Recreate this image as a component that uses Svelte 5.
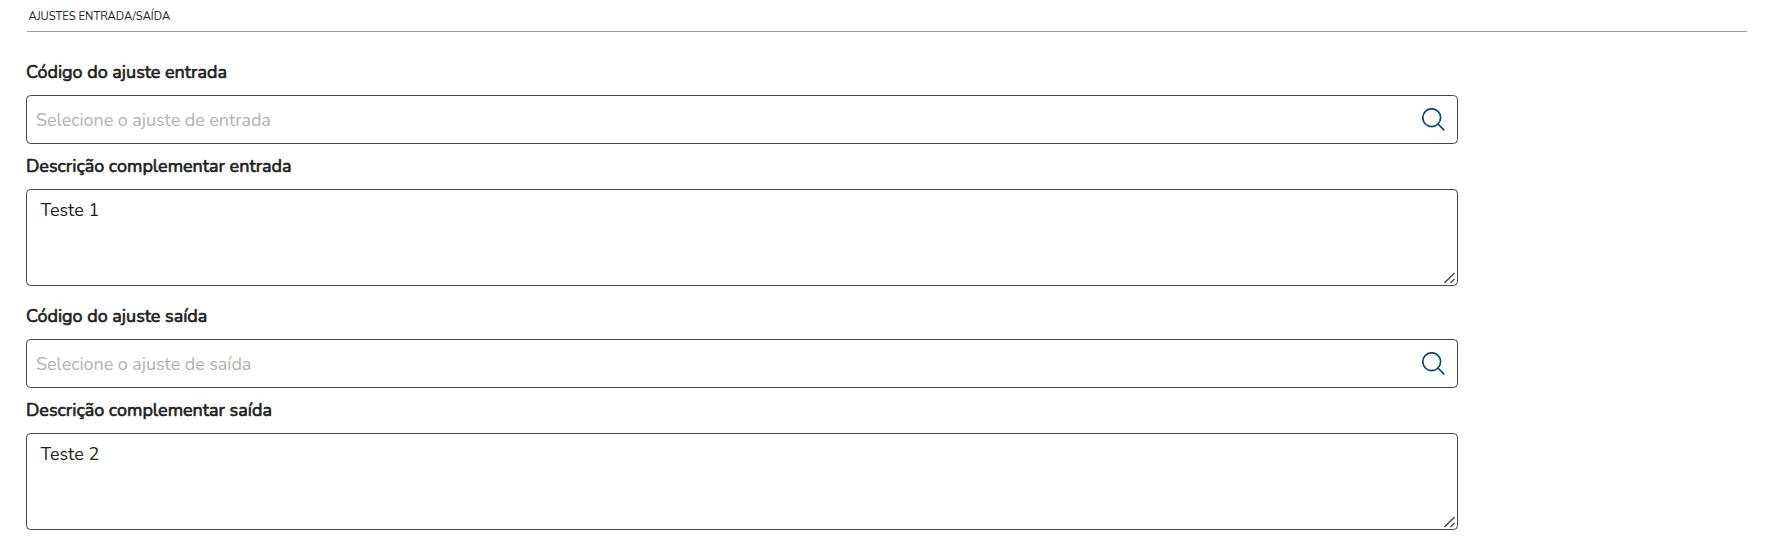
<script lang="ts">
  type Adjustment = {
    id: string;
    name: string;
    code: string;
    description: string;
  };

  let adjustments: Adjustment[] = $state([
    { id: "entrada", name: "entrada", code: "", description: "Teste 1" },
    { id: "saida", name: "saída", code: "", description: "Teste 2" },
  ]);
</script>

<section class="adjustments">
  <h2>AJUSTES ENTRADA/SAÍDA</h2>

  {#each adjustments as item (item.id)}
    <div class="group">
      <label for="code-{item.id}">Código do ajuste {item.name}</label>
      <div class="search-field">
        <input id="code-{item.id}" placeholder="Selecione o ajuste de {item.name}" bind:value={item.code} />
        <button type="button" aria-label="Pesquisar">
          <svg width="24" height="24" viewBox="0 0 24 24" fill="none">
            <circle cx="9.7" cy="9.7" r="8.9" />
            <path d="M16 16l5.8 5.8" />
          </svg>
        </button>
      </div>

      <label class="desc-label" for="desc-{item.id}">Descrição complementar {item.name}</label>
      <div class="text-field">
        <textarea id="desc-{item.id}" spellcheck="false" bind:value={item.description}></textarea>
        <svg class="grip" width="12" height="12" viewBox="0 0 12 12" fill="none">
          <path d="M.5 11 10.5 1M6.5 11l4-4" />
        </svg>
      </div>
    </div>
  {/each}
</section>

<style>
  .adjustments {
    padding: 0 24px 0 26px;
    font-family: Nunito, Lato, sans-serif;
    color: #212121;
  }

  h2 {
    height: 32px; box-sizing: border-box;
    margin: 0 0 0 1px; padding: 9px 0 0 1.5px;
    border-bottom: 1px solid #999;
    font-size: 11.25px; font-weight: 400; line-height: 16px;
  }

  .group { width: 1432px; padding-top: 27px; }
  .group + .group { padding-top: 17px; }

  label {
    display: block; height: 36px;
    font-size: 18px; line-height: 27px; letter-spacing: -.02px;
    -webkit-text-stroke: .65px currentColor;
  }
  .desc-label { margin-top: 9px; }

  .search-field {
    display: flex; align-items: center;
    height: 49px; box-sizing: border-box;
    border: 1px solid #444; border-radius: 4.5px;
  }

  input {
    flex: 1; min-width: 0; height: 45px; box-sizing: border-box;
    padding: 0 9px; border: 0; outline: 0; background: none;
    font: inherit; font-size: 18px; color: inherit;
  }
  input::placeholder { color: #b2b2b2; opacity: 1; letter-spacing: -.065px; }

  button {
    display: flex; margin-right: 11px; padding: 0;
    border: 0; background: none; cursor: pointer;
  }
  button svg { stroke: #0b4871; stroke-width: 1.7; stroke-linecap: round; }

  .text-field { position: relative; height: 97px; }

  textarea {
    display: block; width: 100%; height: 97px; box-sizing: border-box;
    padding: 7px 13.5px; resize: none; outline: 0;
    border: 1px solid #444; border-radius: 4.5px;
    font: inherit; font-size: 18px; line-height: 27px; color: inherit;
  }

  .grip {
    position: absolute; right: 2px; bottom: 2px;
    stroke: #555; stroke-width: 1.6; pointer-events: none;
  }
</style>
